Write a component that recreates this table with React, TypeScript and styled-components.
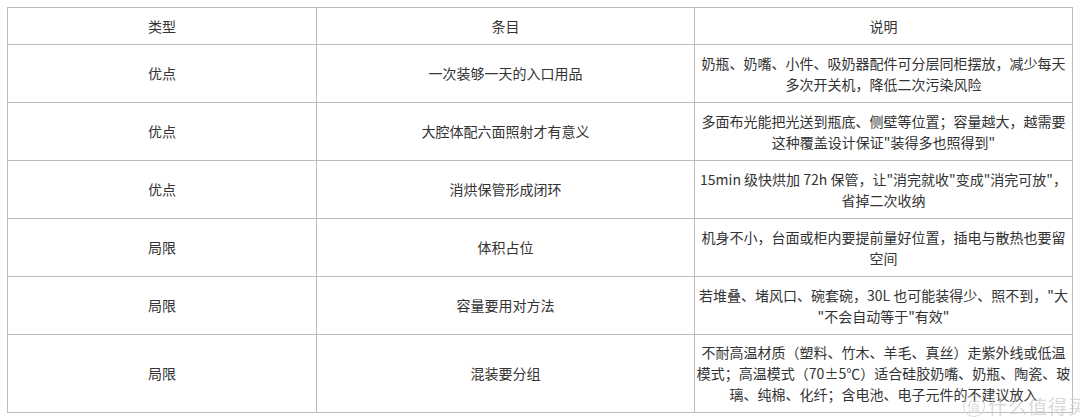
import React from "react";
import styled, { createGlobalStyle } from "styled-components";

const GlobalStyle = createGlobalStyle`
  html, body { margin: 0; padding: 0; background: #ffffff; }
  body { font-family: "Noto Sans CJK SC", "Noto Sans", sans-serif; }
`;

const Page = styled.div`
  position: relative;
  padding: 7px 0 0 7px;
  width: 1080px;
  height: 420px;
  box-sizing: border-box;
  overflow: hidden;
`;

const Table = styled.table`
  border-collapse: collapse;
  table-layout: fixed;
  width: 1065px;
  border: 1px solid #1e1e1e;
  font-size: 14px;
  line-height: 21px;
  color: #333333;
`;

const Col = styled.col<{ $w: number }>`
  width: ${(p) => p.$w}px;
`;

const Row = styled.tr<{ $h: number }>`
  height: ${(p) => p.$h}px;
`;

const Cell = styled.td`
  border: 1px solid #bdbdbd;
  padding: 0 1px;
  text-align: center;
  vertical-align: middle;
  font-weight: 400;
`;

const HeadCell = styled(Cell).attrs({ as: "th" })``;

const Line = styled.span`
  display: block;
  white-space: nowrap;
`;

const Watermark = styled.div`
  position: absolute;
  right: -8px;
  bottom: 1px;
  display: flex;
  align-items: center;
  gap: 3px;
  color: rgba(200, 200, 200, 0.7);
  font-size: 19px;
  font-family: "Noto Sans CJK SC", sans-serif;
  letter-spacing: 1px;
  pointer-events: none;
`;

const Badge = styled.span`
  width: 22px;
  height: 22px;
  border-radius: 50%;
  border: 1.5px solid rgba(200, 200, 200, 0.7);
  display: flex;
  align-items: center;
  justify-content: center;
  font-size: 13px;
  box-sizing: border-box;
`;

const rows: { type: string; item: string; desc: string[]; h: number }[] = [
  {
    type: "优点",
    item: "一次装够一天的入口用品",
    desc: ["奶瓶、奶嘴、小件、吸奶器配件可分层同柜摆放，减少每天", "多次开关机，降低二次污染风险"],
    h: 58,
  },
  {
    type: "优点",
    item: "大腔体配六面照射才有意义",
    desc: ["多面布光能把光送到瓶底、侧壁等位置；容量越大，越需要", "这种覆盖设计保证\"装得多也照得到\""],
    h: 58,
  },
  {
    type: "优点",
    item: "消烘保管形成闭环",
    desc: ["15min 级快烘加 72h 保管，让\"消完就收\"变成\"消完可放\"，", "省掉二次收纳"],
    h: 58,
  },
  {
    type: "局限",
    item: "体积占位",
    desc: ["机身不小，台面或柜内要提前量好位置，插电与散热也要留", "空间"],
    h: 58,
  },
  {
    type: "局限",
    item: "容量要用对方法",
    desc: ["若堆叠、堵风口、碗套碗，30L 也可能装得少、照不到，\"大", "\"不会自动等于\"有效\""],
    h: 58,
  },
  {
    type: "局限",
    item: "混装要分组",
    desc: [
      "不耐高温材质（塑料、竹木、羊毛、真丝）走紫外线或低温",
      "模式；高温模式（70±5℃）适合硅胶奶嘴、奶瓶、陶瓷、玻",
      "璃、纯棉、化纤；含电池、电子元件的不建议放入",
    ],
    h: 78,
  },
];

export default function App() {
  return (
    <>
      <GlobalStyle />
      <Page>
        <Table>
          <colgroup>
            <Col $w={309} />
            <Col $w={378} />
            <Col $w={378} />
          </colgroup>
          <thead>
            <Row $h={37}>
              <HeadCell>类型</HeadCell>
              <HeadCell>条目</HeadCell>
              <HeadCell>说明</HeadCell>
            </Row>
          </thead>
          <tbody>
            {rows.map((r, i) => (
              <Row key={i} $h={r.h}>
                <Cell>{r.type}</Cell>
                <Cell>{r.item}</Cell>
                <Cell>
                  {r.desc.map((l, j) => (
                    <Line key={j}>{l}</Line>
                  ))}
                </Cell>
              </Row>
            ))}
          </tbody>
        </Table>
        <Watermark>
          <Badge>值</Badge>
          <span>什么值得买</span>
        </Watermark>
      </Page>
    </>
  );
}
